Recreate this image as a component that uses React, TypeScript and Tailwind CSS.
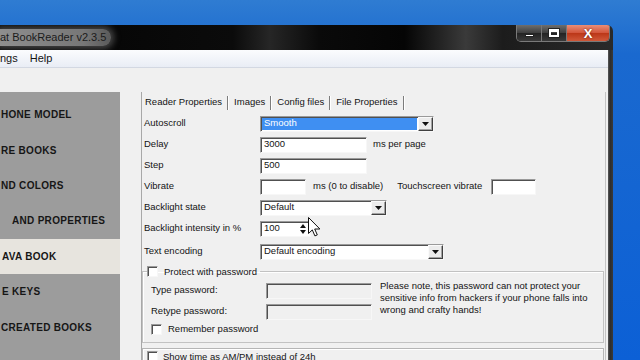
import React from "react";

const SUNKEN =
  "border border-t-[#9a9a9a] border-l-[#9a9a9a] border-r-[#f7f7f7] border-b-[#f7f7f7] shadow-[inset_1px_1px_0_#505050]";
const RAISED =
  "bg-[#ececec] border border-t-[#fafafa] border-l-[#fafafa] border-r-[#404040] border-b-[#404040] shadow-[inset_-1px_-1px_0_#a3a3a3]";

function Down({ w = 7 }: { w?: number }) {
  return (
    <svg width={w} height={4} viewBox="0 0 7 4">
      <path d="M0 0h7L3.5 4z" fill="#111" />
    </svg>
  );
}

function Combo({ className, value, selected }: { className: string; value: string; selected?: boolean }) {
  return (
    <div className={`flex h-[16px] items-stretch bg-white ${SUNKEN} ${className}`}>
      <div className="flex flex-1 items-center p-[1px]">
        <span
          className={`flex h-full flex-1 items-center pl-[2px] ${
            selected ? "bg-[#3f8ff2] text-white" : ""
          }`}
        >
          {value}
        </span>
      </div>
      <div className={`flex w-[15px] items-center justify-center ${RAISED}`}>
        <Down />
      </div>
    </div>
  );
}

function TextBox({ className, value, disabled }: { className: string; value?: string; disabled?: boolean }) {
  return (
    <div
      className={`flex h-[16px] items-center pl-[3px] ${disabled ? "bg-[#f0f0f0]" : "bg-white"} ${SUNKEN} ${className}`}
    >
      {value}
    </div>
  );
}

function Check() {
  return <span className={`h-[11px] w-[11px] shrink-0 bg-white ${SUNKEN}`} />;
}

function Row({ label, children, className = "" }: { label: string; children?: React.ReactNode; className?: string }) {
  return (
    <div className={`flex h-[21px] shrink-0 items-center pl-[2px] ${className}`}>
      <span className="w-[116px] shrink-0">{label}</span>
      {children}
    </div>
  );
}

const SIDE = [
  { t: "HONE MODEL", pl: "pl-[1px]" },
  { t: "RE BOOKS", pl: "pl-[1px]" },
  { t: "ND COLORS", pl: "pl-[1px]" },
  { t: "AND PROPERTIES", pl: "pl-[12px]" },
  { t: "AVA BOOK", pl: "pl-[2px]", active: true },
  { t: "E KEYS", pl: "pl-[2px]" },
  { t: "CREATED BOOKS", pl: "pl-[1px]" },
];

const TABS = ["Reader Properties", "Images", "Config files", "File Properties"];

export default function App() {
  return (
    <div className="relative h-[360px] w-[640px] overflow-hidden bg-[linear-gradient(180deg,#2f7cd2_0%,#1a69cf_15%,#0c60d6_100%)] pt-[25px] font-['Liberation_Sans',Arial,sans-serif] text-[#141414]">
      <div className="flex h-[335px] w-[613px] flex-col overflow-hidden rounded-tr-[6px]">
        {/* title bar */}
        <div className="flex h-[25px] shrink-0 items-start justify-between bg-[linear-gradient(90deg,#030303_0%,#0b0b0b_38%,#262626_44%,#0a0a0a_52%,#050505_66%,#3a3a3a_76%,#1c1c1c_82%,#2a2a2a_100%)]">
          <div className="mt-[4px] flex h-[17px] items-center rounded-r-[8px] bg-[linear-gradient(90deg,#8e8e8e,#777_75%,#5a5a5a)] pr-[5px] text-[11px] text-[#1b1b1b] shadow-[0_0_6px_3px_rgba(110,110,110,0.6)]">
            at BookReader v2.3.5
          </div>
          <div className="mr-[3px] flex h-[17px] overflow-hidden rounded-b-[5px] border border-t-0 border-[#7a7a7a]">
            <div className="flex w-[25px] items-center justify-center border-r border-[#777] bg-[linear-gradient(180deg,#6e6e6e,#3d3d3d_50%,#232323_51%,#3a3a3a)]">
              <span className="mt-[5px] h-[3px] w-[9px] border border-[#222] bg-white" />
            </div>
            <div className="flex w-[25px] items-center justify-center border-r border-[#777] bg-[linear-gradient(180deg,#6e6e6e,#3d3d3d_50%,#232323_51%,#3a3a3a)]">
              <span className="h-[8px] w-[10px] border-2 border-t-[3px] border-white shadow-[0_0_0_1px_#222]" />
            </div>
            <div className="flex w-[42px] items-center justify-center bg-[linear-gradient(180deg,#e88e77,#d2543a_50%,#bb3617_51%,#d0593a)] text-[13px] font-bold leading-none text-white [text-shadow:0_0_2px_#5a1a0a]">
              X
            </div>
          </div>
        </div>

        <div className="flex min-h-0 flex-1">
          <div className="flex min-w-0 flex-1 flex-col">
            {/* menu bar */}
            <div className="flex h-[18px] shrink-0 items-center gap-[12px] border-b border-[#d3d8e2] bg-[linear-gradient(180deg,#fbfcfe,#e9edf5)] text-[11px]">
              <span>ngs</span>
              <span>Help</span>
            </div>

            {/* client */}
            <div className="flex min-h-0 flex-1 overflow-hidden bg-[#f0f0f0] pt-[24px] text-[9.5px]">
              <div className="w-[120px] shrink-0 bg-[#9c9c9c] pt-[5px]">
                {SIDE.map((s) => (
                  <div
                    key={s.t}
                    className={`flex h-[35.4px] items-center whitespace-nowrap text-[10px] font-bold tracking-[0.3px] text-[#161616] ${s.pl} ${
                      s.active ? "bg-[#e7e4de]" : ""
                    }`}
                  >
                    {s.t}
                  </div>
                ))}
              </div>

              <div className="ml-[21px] flex w-[465px] shrink-0 flex-col border-l border-r border-l-[#a8a8a8] border-r-[#c4c4c4]">
                {/* tabs */}
                <div className="flex h-[21px] shrink-0 items-center gap-[5px] pl-[3px]">
                  {TABS.map((t) => (
                    <React.Fragment key={t}>
                      <span className="whitespace-nowrap">{t}</span>
                      <span className="h-[14px] w-[2px] bg-[linear-gradient(90deg,#7c7c7c_50%,#fff_50%)]" />
                    </React.Fragment>
                  ))}
                </div>

                <Row label="Autoscroll">
                  <Combo className="w-[174px]" value="Smooth" selected />
                </Row>
                <Row label="Delay">
                  <TextBox className="w-[107px]" value="3000" />
                  <span className="ml-[6px]">ms per page</span>
                </Row>
                <Row label="Step">
                  <TextBox className="w-[107px]" value="500" />
                </Row>
                <Row label="Vibrate">
                  <TextBox className="w-[46px]" />
                  <span className="ml-[7px] whitespace-nowrap">ms (0 to disable)</span>
                  <span className="ml-[14px] whitespace-nowrap">Touchscreen vibrate</span>
                  <TextBox className="ml-[9px] w-[45px]" />
                </Row>
                <Row label="Backlight state">
                  <Combo className="w-[127px]" value="Default" />
                </Row>
                <Row label="Backlight intensity in %">
                  <div className={`flex h-[16px] w-[51px] items-stretch bg-white ${SUNKEN}`}>
                    <span className="flex flex-1 items-center pl-[3px]">100</span>
                    <div className="my-[1px] mr-[2px] flex w-[11px] flex-col">
                      <span className="flex flex-1 items-center justify-center">
                        <svg width="6" height="4" viewBox="0 0 6 4">
                          <path d="M0 4h6L3 0z" fill="#111" />
                        </svg>
                      </span>
                      <span className="flex flex-1 items-center justify-center">
                        <svg width="6" height="4" viewBox="0 0 6 4">
                          <path d="M0 0h6L3 4z" fill="#111" />
                        </svg>
                      </span>
                    </div>
                  </div>
                </Row>
                <Row label="Text encoding" className="mt-[2px]">
                  <Combo className="w-[184px]" value="Default encoding" />
                </Row>

                {/* password group */}
                <fieldset className="mt-[3px] mr-[1px] shrink-0 border border-[#c2c2c2] pb-[6px] shadow-[inset_1px_1px_0_#fff]">
                  <legend className="ml-[4px] flex items-center gap-[6px] pr-[3px] leading-[13px]">
                    <Check />
                    <span>Protect with password</span>
                  </legend>
                  <div className="flex pt-[2px]">
                    <div className="flex flex-col">
                      <div className="flex h-[21px] items-center pl-[8px]">
                        <span className="w-[115px]">Type password:</span>
                        <TextBox className="w-[106px]" disabled />
                      </div>
                      <div className="flex h-[21px] items-center pl-[8px]">
                        <span className="w-[115px]">Retype password:</span>
                        <TextBox className="w-[106px]" disabled />
                      </div>
                    </div>
                    <p className="ml-[8px] leading-[12px]">
                      Please note, this password can not protect your
                      <br />
                      sensitive info from hackers if your phone falls into
                      <br />
                      wrong and crafty hands!
                    </p>
                  </div>
                  <div className="flex h-[14px] items-center gap-[6px] pl-[8px]">
                    <Check />
                    <span>Remember password</span>
                  </div>
                </fieldset>

                <div className="mt-[5px] mr-[1px] flex h-[20px] shrink-0 items-start gap-[5px] border border-[#b5b5b5] pl-[4px] pt-[2px] shadow-[inset_1px_1px_0_#fff]">
                  <Check />
                  <span className="leading-[11px]">Show time as AM/PM instead of 24h</span>
                </div>
              </div>
            </div>
          </div>
          <div className="w-[5px] shrink-0 bg-[linear-gradient(90deg,#5a5a5a,#2c2c2c_40%,#3a3a3a)]" />
        </div>
      </div>

      {/* mouse pointer */}
      <svg className="absolute left-[308px] top-[217px]" width="13" height="20" viewBox="0 0 13 20">
        <path d="M0.5 0.5v16l3.8-3.6 2.6 6 2.4-1-2.6-5.9h5.2z" fill="#fff" stroke="#111" strokeWidth="1" />
      </svg>
    </div>
  );
}
